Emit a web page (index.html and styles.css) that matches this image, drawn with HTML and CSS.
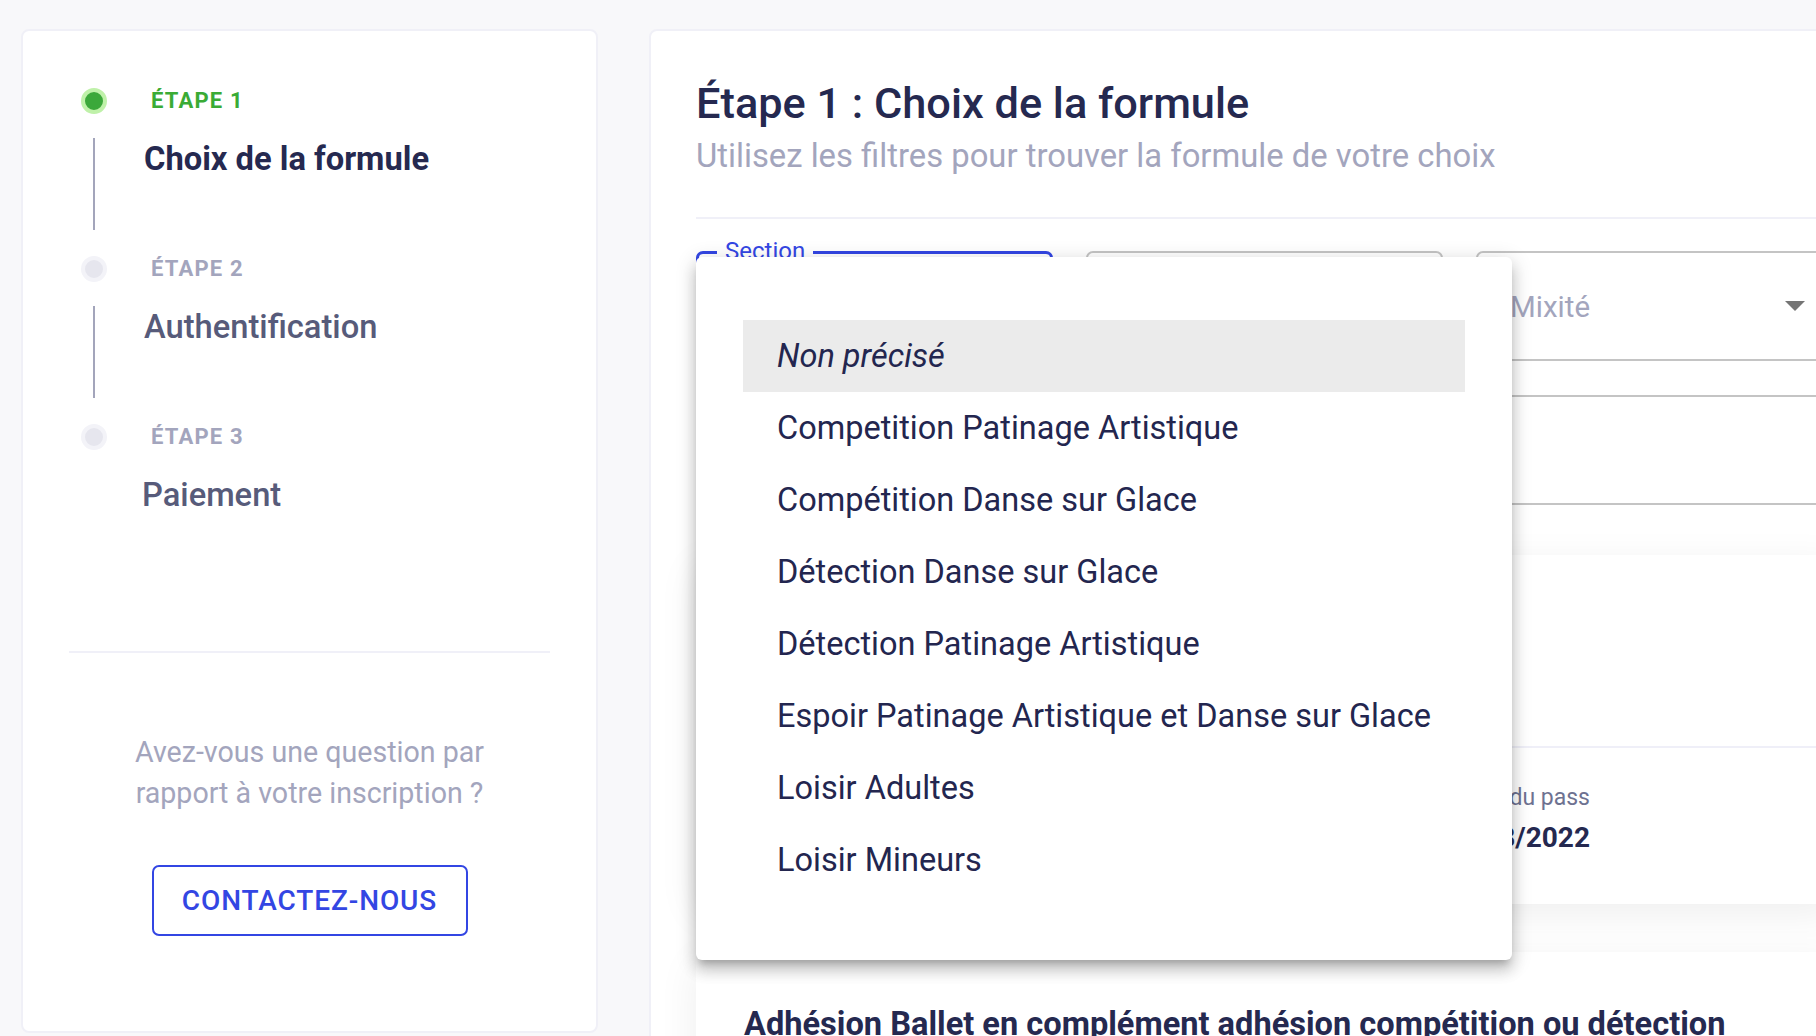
FILE: index.html
```html
<!DOCTYPE html>
<html lang="fr">
<head>
<meta charset="utf-8">
<title>Inscription - Choix de la formule</title>
<link rel="stylesheet" href="styles.css">
</head>
<body>
<div class="page">
  <aside class="side-card">
    <ol class="steps">
      <li class="step step--active">
        <div class="step-head"><span class="dot"></span><span class="step-label">ÉTAPE 1</span></div>
        <div class="step-body"><span class="connector"></span><span class="step-title">Choix de la formule</span></div>
      </li>
      <li class="step">
        <div class="step-head"><span class="dot"></span><span class="step-label">ÉTAPE 2</span></div>
        <div class="step-body"><span class="connector"></span><span class="step-title">Authentification</span></div>
      </li>
      <li class="step">
        <div class="step-head"><span class="dot"></span><span class="step-label">ÉTAPE 3</span></div>
        <div class="step-body"><span class="connector"></span><span class="step-title step-title--last">Paiement</span></div>
      </li>
    </ol>
    <hr class="side-divider">
    <p class="help">Avez-vous une question par rapport à votre inscription ?</p>
    <button class="contact" type="button">CONTACTEZ-NOUS</button>
  </aside>

  <main class="main-card">
    <h1 class="main-title">Étape 1 : Choix de la formule</h1>
    <p class="subtitle">Utilisez les filtres pour trouver la formule de votre choix</p>
    <hr class="main-divider">

    <div class="filters">
      <div class="field field--focused"><span class="field-label">Section</span></div>
      <div class="field"></div>
      <div class="field"><span class="placeholder">Mixité</span>
        <svg class="arrow" width="20" height="10" viewBox="0 0 20 10"><path d="M0 0 L10 10 L20 0 Z" fill="#757575"/></svg>
      </div>
      <div class="field"></div>
      <div class="field"></div>
      <div class="field"></div>
    </div>

    <section class="offer offer--first">
      <div class="offer-top"></div>
      <div class="offer-divider"></div>
      <div class="info-row">
        <div class="info"><span class="info-label">Date de fin du pass</span><span class="info-value">31/08/2022</span></div>
      </div>
    </section>

    <section class="offer offer--second">
      <h2 class="offer-title">Adhésion Ballet en complément adhésion compétition ou détection</h2>
    </section>
  </main>

  <ul class="menu">
    <li class="menu-item menu-item--selected">Non précisé</li>
    <li class="menu-item">Competition Patinage Artistique</li>
    <li class="menu-item">Compétition Danse sur Glace</li>
    <li class="menu-item">Détection Danse sur Glace</li>
    <li class="menu-item">Détection Patinage Artistique</li>
    <li class="menu-item">Espoir Patinage Artistique et Danse sur Glace</li>
    <li class="menu-item">Loisir Adultes</li>
    <li class="menu-item">Loisir Mineurs</li>
  </ul>
</div>
</body>
</html>
```

FILE: styles.css
```css
* { box-sizing: border-box; }

html, body {
  margin: 0;
  width: 1816px;
  height: 1036px;
  overflow: hidden;
  background: #f8f8fa;
  font-family: Roboto, "Noto Sans", "Liberation Sans", sans-serif;
}

.page {
  position: relative;
  display: flex;
  align-items: flex-start;
  gap: 51px;
  padding: 29px 0 0 21px;
  height: 1036px;
}

/* ---------- Sidebar ---------- */
.side-card {
  flex: 0 0 577px;
  height: 1004px;
  background: #fff;
  border: 2px solid #f0f0f7;
  border-radius: 8px;
  padding: 57px 46px 0;
}

.steps {
  list-style: none;
  margin: 0;
  padding: 0 0 0 12px;
}

.step-head {
  display: flex;
  align-items: center;
  height: 26px;
}

.dot {
  flex: 0 0 26px;
  width: 26px;
  height: 26px;
  border-radius: 50%;
  border: 4px solid #f3f3f8;
  background: #e6e6ee;
}

.step--active .dot {
  border-color: #bff1a9;
  background: #3ba83a;
}

.step-label {
  margin-left: 44px;
  margin-top: -2px;
  font-size: 22px;
  font-weight: 700;
  letter-spacing: 1.2px;
  color: #a3a5bd;
}

.step--active .step-label { color: #3aab35; }

.step-body {
  display: flex;
  align-items: flex-start;
  height: 142px;
}

.connector {
  flex: 0 0 2px;
  height: 92px;
  margin: 24px 12px 0;
  background: #a3a5bb;
}

.step:last-child .connector { visibility: hidden; }

.step-title {
  margin: 25px 0 0 37px;
  font-size: 32.7px;
  line-height: 40px;
  font-weight: 500;
  color: #575b7a;
}

.step--active .step-title {
  font-weight: 700;
  color: #252950;
}

.step-title--last { margin-left: 35px; }

.side-divider {
  border: 0;
  height: 2px;
  margin: 59px 0 0;
  background: #f0f0f8;
}

.help {
  margin: 79px auto 0;
  max-width: 390px;
  text-align: center;
  font-size: 28.6px;
  line-height: 41px;
  color: #a3a5bd;
}

.contact {
  display: flex;
  align-items: center;
  justify-content: center;
  width: 316px;
  height: 71px;
  margin: 51px auto 0;
  border: 2px solid #3346e3;
  border-radius: 7px;
  background: #fff;
  color: #3346e3;
  font-family: Roboto, sans-serif;
  font-size: 28px;
  font-weight: 500;
  letter-spacing: 0.9px;
}

/* ---------- Main ---------- */
.main-card {
  flex: 0 0 1235px;
  height: 1100px;
  background: #fff;
  border: 2px solid #f0f0f7;
  border-radius: 8px;
  padding: 48px 45px 0;
}

.main-title {
  margin: 0;
  font-size: 43.3px;
  line-height: 49px;
  font-weight: 500;
  color: #252950;
}

.subtitle {
  margin: 7px 0 0;
  font-size: 32.8px;
  line-height: 42px;
  color: #a3a5bd;
}

.main-divider {
  border: 0;
  height: 2px;
  margin: 40px 0 0;
  background: #f0f0f8;
}

.filters {
  display: grid;
  grid-template-columns: repeat(3, 357px);
  gap: 34px 33px;
  margin-top: 32px;
}

.field {
  position: relative;
  display: flex;
  align-items: center;
  height: 110px;
  padding: 0 26px 0 32px;
  border: 2px solid #c4c4c4;
  border-radius: 7px;
}

.field--focused {
  border: 3px solid #3346e3;
  padding-left: 31px;
}

.field-label {
  position: absolute;
  top: -15px;
  left: 18px;
  padding: 0 8px;
  background: #fff;
  font-size: 24px;
  line-height: 24px;
  color: #3346e3;
}

.placeholder {
  flex: 1;
  margin-top: 2px;
  font-size: 29.5px;
  color: #a3a5bd;
}

.arrow { flex: 0 0 20px; }

.offer {
  background: #fff;
  border-radius: 8px;
  box-shadow: 0 10px 40px rgba(0, 0, 0, 0.07);
  padding: 0 48px;
}

.offer--first { margin-top: 50px; }

.offer-top { height: 191px; }

.offer-title {
  margin: 0;
  font-size: 32.6px;
  line-height: 36px;
  font-weight: 700;
  color: #252950;
  white-space: nowrap;
}

.offer-divider {
  height: 2px;
  margin: 0 -48px;
  background: #efeff8;
}

.info-row {
  display: flex;
  justify-content: flex-end;
  padding: 35px 199px 49px 0;
}

.info {
  display: flex;
  flex-direction: column;
  align-items: flex-end;
}

.info-label {
  font-size: 23px;
  line-height: 30px;
  color: #6e7291;
}

.info-value {
  margin-top: 8px;
  font-size: 28px;
  line-height: 34px;
  font-weight: 700;
  color: #252950;
}

.offer--second {
  margin-top: 48px;
  height: 200px;
  padding-top: 54px;
}

/* ---------- Dropdown menu ---------- */
.menu {
  position: absolute;
  left: 696px;
  top: 257px;
  width: 816px;
  margin: 0;
  padding: 63px 47px 64px;
  list-style: none;
  background: #fff;
  border-radius: 6px;
  box-shadow: 0 7px 7px -4px rgba(0, 0, 0, 0.2),
              0 11px 14px 1px rgba(0, 0, 0, 0.14),
              0 4px 19px 3px rgba(0, 0, 0, 0.12);
}

.menu-item {
  display: flex;
  align-items: center;
  height: 72px;
  padding-left: 34px;
  font-size: 32.5px;
  color: #23264f;
  white-space: nowrap;
}

.menu-item--selected {
  background: #ebebeb;
  font-style: italic;
}
```
